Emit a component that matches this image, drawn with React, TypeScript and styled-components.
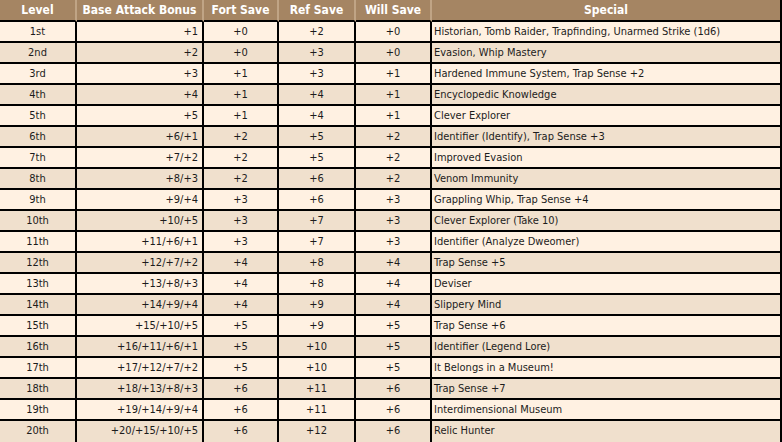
import React from 'react';
import styled, { createGlobalStyle } from 'styled-components';

const GlobalStyle = createGlobalStyle`
  html, body {
    margin: 0;
    padding: 0;
    background: #fff;
  }
  body {
    font-family: "DejaVu Sans Condensed", "DejaVu Sans", sans-serif;
    overflow: hidden;
  }
`;

interface LevelRow {
  level: string;
  bab: string;
  fort: string;
  ref: string;
  will: string;
  special: string;
}

const rows: LevelRow[] = [
  { level: '1st', bab: '+1', fort: '+0', ref: '+2', will: '+0', special: 'Historian, Tomb Raider, Trapfinding, Unarmed Strike (1d6)' },
  { level: '2nd', bab: '+2', fort: '+0', ref: '+3', will: '+0', special: 'Evasion, Whip Mastery' },
  { level: '3rd', bab: '+3', fort: '+1', ref: '+3', will: '+1', special: 'Hardened Immune System, Trap Sense +2' },
  { level: '4th', bab: '+4', fort: '+1', ref: '+4', will: '+1', special: 'Encyclopedic Knowledge' },
  { level: '5th', bab: '+5', fort: '+1', ref: '+4', will: '+1', special: 'Clever Explorer' },
  { level: '6th', bab: '+6/+1', fort: '+2', ref: '+5', will: '+2', special: 'Identifier (Identify), Trap Sense +3' },
  { level: '7th', bab: '+7/+2', fort: '+2', ref: '+5', will: '+2', special: 'Improved Evasion' },
  { level: '8th', bab: '+8/+3', fort: '+2', ref: '+6', will: '+2', special: 'Venom Immunity' },
  { level: '9th', bab: '+9/+4', fort: '+3', ref: '+6', will: '+3', special: 'Grappling Whip, Trap Sense +4' },
  { level: '10th', bab: '+10/+5', fort: '+3', ref: '+7', will: '+3', special: 'Clever Explorer (Take 10)' },
  { level: '11th', bab: '+11/+6/+1', fort: '+3', ref: '+7', will: '+3', special: 'Identifier (Analyze Dweomer)' },
  { level: '12th', bab: '+12/+7/+2', fort: '+4', ref: '+8', will: '+4', special: 'Trap Sense +5' },
  { level: '13th', bab: '+13/+8/+3', fort: '+4', ref: '+8', will: '+4', special: 'Deviser' },
  { level: '14th', bab: '+14/+9/+4', fort: '+4', ref: '+9', will: '+4', special: 'Slippery Mind' },
  { level: '15th', bab: '+15/+10/+5', fort: '+5', ref: '+9', will: '+5', special: 'Trap Sense +6' },
  { level: '16th', bab: '+16/+11/+6/+1', fort: '+5', ref: '+10', will: '+5', special: 'Identifier (Legend Lore)' },
  { level: '17th', bab: '+17/+12/+7/+2', fort: '+5', ref: '+10', will: '+5', special: 'It Belongs in a Museum!' },
  { level: '18th', bab: '+18/+13/+8/+3', fort: '+6', ref: '+11', will: '+6', special: 'Trap Sense +7' },
  { level: '19th', bab: '+19/+14/+9/+4', fort: '+6', ref: '+11', will: '+6', special: 'Interdimensional Museum' },
  { level: '20th', bab: '+20/+15/+10/+5', fort: '+6', ref: '+12', will: '+6', special: 'Relic Hunter' },
];

const Table = styled.table`
  width: 782px;
  border-collapse: separate;
  border-spacing: 0;
  table-layout: fixed;
  font-size: 11px;
  color: #1c1c1c;
`;

const HeadCell = styled.th<{ $last?: boolean }>`
  height: 20px;
  padding: 0;
  background: #a58563;
  color: #ffffff;
  font-weight: bold;
  font-size: 12px;
  text-align: center;
  border-bottom: 2px solid #000;
  border-right: 2px solid ${({ $last }) => ($last ? '#000' : '#c0a485')};
  line-height: 20px;
`;

const Row = styled.tr<{ $alt: boolean }>`
  background: ${({ $alt }) => ($alt ? '#f0e0cd' : '#fff1e2')};
`;

const Cell = styled.td<{ $align?: 'left' | 'center' | 'right'; $lastRow?: boolean }>`
  height: ${({ $lastRow }) => ($lastRow ? '21px' : '19px')};
  padding: ${({ $align }) => ($align === 'right' ? '0 4px 0 0' : $align === 'left' ? '0 0 0 2px' : '0')};
  text-align: ${({ $align }) => $align || 'center'};
  vertical-align: ${({ $lastRow }) => ($lastRow ? 'top' : 'middle')};
  border-right: 2px solid #000;
  border-bottom: ${({ $lastRow }) => ($lastRow ? 'none' : '2px solid #000')};
  line-height: 19px;
  white-space: nowrap;
  overflow: hidden;
`;

export default function App() {
  return (
    <>
      <GlobalStyle />
      <Table>
        <colgroup>
          <col style={{ width: 77 }} />
          <col style={{ width: 127 }} />
          <col style={{ width: 75 }} />
          <col style={{ width: 77 }} />
          <col style={{ width: 76 }} />
          <col style={{ width: 350 }} />
        </colgroup>
        <thead>
          <tr>
            <HeadCell>Level</HeadCell>
            <HeadCell>Base Attack Bonus</HeadCell>
            <HeadCell>Fort Save</HeadCell>
            <HeadCell>Ref Save</HeadCell>
            <HeadCell>Will Save</HeadCell>
            <HeadCell $last>Special</HeadCell>
          </tr>
        </thead>
        <tbody>
          {rows.map((r, i) => {
            const lastRow = i === rows.length - 1;
            return (
              <Row key={r.level} $alt={i % 2 === 1}>
                <Cell $lastRow={lastRow}>{r.level}</Cell>
                <Cell $align="right" $lastRow={lastRow}>{r.bab}</Cell>
                <Cell $lastRow={lastRow}>{r.fort}</Cell>
                <Cell $lastRow={lastRow}>{r.ref}</Cell>
                <Cell $lastRow={lastRow}>{r.will}</Cell>
                <Cell $align="left" $lastRow={lastRow}>{r.special}</Cell>
              </Row>
            );
          })}
        </tbody>
      </Table>
    </>
  );
}
